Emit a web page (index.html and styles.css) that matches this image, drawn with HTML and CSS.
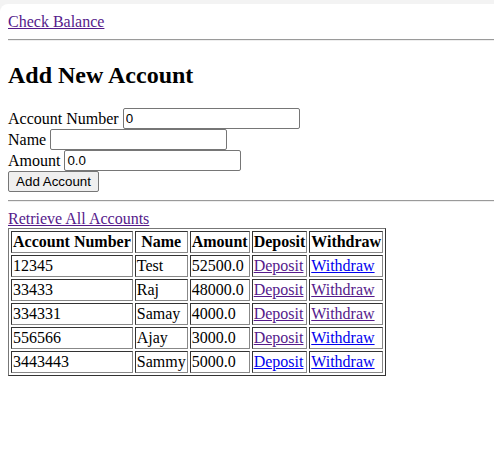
FILE: index.html
```html
<!DOCTYPE html>
<html>
<head>
<meta charset="utf-8">
<title>Accounts</title>
<link rel="stylesheet" href="styles.css">
</head>
<body class="chrome">
<div class="page">
  <a class="link visited" href="#balance">Check Balance</a>
  <hr class="rule">
  <h2 class="title">Add New Account</h2>
  <form class="form">
    <div class="field">Account Number <input class="input" type="text" value="0"></div>
    <div class="field">Name <input class="input" type="text" value=""></div>
    <div class="field">Amount <input class="input" type="text" value="0.0"></div>
    <div class="field"><button class="btn" type="button">Add Account</button></div>
  </form>
  <hr class="rule">
  <div class="line"><a class="link visited" href="#all">Retrieve All Accounts</a></div>
  <table class="grid">
    <tr><th class="cell head">Account Number</th><th class="cell head">Name</th><th class="cell head">Amount</th><th class="cell head">Deposit</th><th class="cell head">Withdraw</th></tr>
    <tr><td class="cell">12345</td><td class="cell">Test</td><td class="cell">52500.0</td><td class="cell"><a class="link visited" href="#d1">Deposit</a></td><td class="cell"><a class="link" href="#w1">Withdraw</a></td></tr>
    <tr><td class="cell">33433</td><td class="cell">Raj</td><td class="cell">48000.0</td><td class="cell"><a class="link visited" href="#d2">Deposit</a></td><td class="cell"><a class="link visited" href="#w2">Withdraw</a></td></tr>
    <tr><td class="cell">334331</td><td class="cell">Samay</td><td class="cell">4000.0</td><td class="cell"><a class="link visited" href="#d3">Deposit</a></td><td class="cell"><a class="link visited" href="#w3">Withdraw</a></td></tr>
    <tr><td class="cell">556566</td><td class="cell">Ajay</td><td class="cell">3000.0</td><td class="cell"><a class="link visited" href="#d4">Deposit</a></td><td class="cell"><a class="link" href="#w4">Withdraw</a></td></tr>
    <tr><td class="cell">3443443</td><td class="cell">Sammy</td><td class="cell">5000.0</td><td class="cell"><a class="link" href="#d5">Deposit</a></td><td class="cell"><a class="link" href="#w5">Withdraw</a></td></tr>
  </table>
</div>
</body>
</html>
```

FILE: styles.css
```css
html, body {
  margin: 0;
  padding: 0;
  height: 100%;
  overflow: hidden;
}
.chrome {
  background: #f3f3f3;
  padding-top: 4px;
  box-sizing: border-box;
  font-family: "Liberation Serif", "Times New Roman", serif;
  font-size: 16px;
  color: #000;
}
.page {
  background: #fff;
  border-top-left-radius: 8px;
  height: 100%;
  box-sizing: border-box;
  padding: 9px 0 8px 8px;
}
.link {
  color: #0000ee;
  text-decoration: underline;
}
.link.visited {
  color: #551a8b;
}
.rule {
  margin: 8px 0;
  border: 0;
  border-top: 1px solid #9a9a9a;
  border-bottom: 1px solid #eeeeee;
  height: 0;
}
.title {
  font-size: 24px;
  font-weight: bold;
  margin: 20px 0 19px;
  line-height: 28px;
}
.form {
  margin: 0;
}
.field {
  height: 21px;
  line-height: 21px;
}
.input {
  box-sizing: border-box;
  width: 177px;
  height: 21px;
  padding: 1px 2px;
  border: 1px solid #767676;
  border-radius: 2px;
  font-family: "Liberation Sans", Arial, sans-serif;
  font-size: 13.333px;
  vertical-align: bottom;
  margin: 0;
}
.btn {
  box-sizing: border-box;
  height: 21px;
  width: 91px;
  padding: 1px 6px;
  border: 1px solid #767676;
  border-radius: 2px;
  background: #efefef;
  font-family: "Liberation Sans", Arial, sans-serif;
  font-size: 13.333px;
  color: #000;
  vertical-align: bottom;
  margin: 0;
}
.line {
  line-height: 18px;
}
.grid {
  border: 1px solid;
  border-color: #777 #333 #333 #777;
  border-spacing: 2px;
  border-collapse: separate;
  margin-top: 0;
}
.cell {
  border: 1px solid;
  border-color: #333 #888 #888 #333;
  padding: 1px;
  text-align: left;
  line-height: 18px;
  white-space: nowrap;
}
.head {
  font-weight: bold;
  text-align: center;
}
```
